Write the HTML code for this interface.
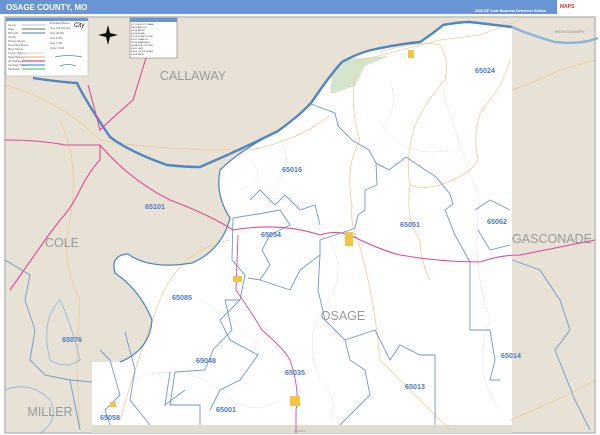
<!DOCTYPE html>
<html><head><style>
html,body{margin:0;padding:0;width:600px;height:435px;overflow:hidden;background:#fff;font-family:"Liberation Sans",sans-serif}
</style></head><body>
<svg width="600" height="435" viewBox="0 0 600 435" xmlns="http://www.w3.org/2000/svg" font-family="Liberation Sans, sans-serif">
<rect width="600" height="435" fill="#fff"/>
<rect x="0" y="0" width="557" height="14" fill="#6a95d5"/>
<text x="6" y="10" font-size="8" font-weight="bold" fill="#fff">OSAGE COUNTY, MO</text>
<text x="546" y="12" font-size="3.5" fill="#fff" text-anchor="end" font-weight="bold">2026 ZIP Code Business Reference Edition</text>
<rect x="557" y="0" width="43" height="14" fill="#fff"/>
<text x="560" y="8" font-size="5" fill="#c33" font-weight="bold">MAPS</text>
<rect x="5" y="17" width="590" height="416" fill="#e7e2d5" stroke="#bbb" stroke-width="1.5"/>
<path d="M92,362 L120,362 Q150,350 152,320 Q140,290 115,273 Q110,255 128,254 Q150,270 192,263 Q222,250 230,218 Q215,195 220,170 Q240,150 278,131 Q300,115 311,103 Q330,75 342,62 Q360,52 376,49 Q400,44 420,42 Q435,32 443,25 Q460,22 470,22 L512,27 L512,427 L300,426 L92,428 Z" fill="#fff"/>
<rect x="92" y="425" width="420" height="8" fill="#e0dccf"/>
<text x="300" y="432" font-size="3" fill="#999" text-anchor="middle">MARIES</text>
<path d="M330,93 L332,76 L342,59 L389,56 L365,66 L355,86 L335,93 Z" fill="#d5e5cc"/>
<g fill="none" stroke="#efc68f" stroke-width="0.8" opacity="0.9">
<path d="M5,85 Q60,100 100,140 Q150,150 250,150 Q300,140 330,115 M355,62 Q400,50 440,40 L480,35 L520,20"/>
<path d="M380,52 Q420,40 440,45 Q450,60 445,80 Q430,95 415,125 Q405,160 410,185 Q420,190 440,185 Q470,175 478,160 Q470,120 490,100 Q505,80 510,60"/>
<path d="M355,75 Q350,110 360,140 Q345,165 352,205 Q350,225 358,240 Q375,300 380,360 Q420,400 450,430"/>
<path d="M410,185 Q405,220 420,240 Q420,260 430,280"/>
<path d="M60,120 Q80,160 70,220 Q60,260 80,300 Q75,360 80,430"/>
<path d="M230,240 Q180,250 160,300 Q140,350 120,420"/>
<path d="M510,420 Q560,400 595,380 M512,90 Q540,80 560,70 L595,60"/>
</g>
<g fill="none" stroke="#e2e2e2" stroke-width="0.5">
<path d="M250,200 Q300,190 320,230 Q350,260 330,300 Q300,330 320,380 Q340,400 330,420"/>
<path d="M440,80 Q460,150 480,200 Q470,260 490,320 Q470,370 500,410"/>
<path d="M130,380 Q180,360 220,390 Q250,420 280,400"/>
<path d="M280,140 Q300,170 260,200 M380,120 Q400,160 450,150 M200,300 Q240,320 260,350 M390,80 Q400,110 380,130 M250,160 Q270,180 240,190"/>
</g>
<g fill="none" stroke="#6f98c9" stroke-width="0.9">
<path d="M311,104 L335,113 L338,126 L352,140 L369,150 L376,163 L389,170 L406,157 L436,177 L450,194 L453,204 L445,210 L455,235 L470,262 L470,285 L470,330 L490,330 L495,360 L490,380 L500,380"/>
<path d="M376,163 L377,185 L365,190 L365,210 L358,215 L355,228"/>
<path d="M233,218 L258,214 L280,210 L290,225 L270,235 L262,250 L270,265 L260,280 L248,278"/>
<path d="M250,200 L260,190 L275,205 L285,195 L300,210 L315,205 L320,225"/>
<path d="M260,280 L290,290 L300,270 L320,255 L320,240 L350,230 L355,228"/>
<path d="M320,255 L318,290 L325,320 L345,340 L350,360 L365,370 L370,395 L340,425"/>
<path d="M345,340 L375,330 L390,360 L400,345 L420,355 L435,355 L435,425"/>
<path d="M475,210 L490,200 L510,210 M478,230 L490,250 L510,245"/>
<path d="M100,350 L110,360 L120,395 L105,410 L110,425 M125,332 L135,370 L130,400 L150,425"/>
<path d="M233,218 L232,260 L245,275 L240,300 L225,300 L232,330 L213,350 L205,370 L175,372 L170,405 L200,405 L200,425"/>
<path d="M170,372 L165,405 L185,390 M240,300 L220,320 L230,340 L258,355 L240,380 L220,390 L210,410"/>
<path d="M5,260 L30,275 L25,300 L35,330 L30,360 L45,375 L70,380 L92,382 M70,380 L80,430 M512,260 L540,270 L560,300 L570,330 L555,350 L575,400 L590,430"/>
</g>
<g fill="none" stroke="#4f87c2">
<path d="M33,78 Q60,82 77,83 Q85,100 110,137 Q130,152 167,165 Q185,167 200,167 Q240,150 278,131 Q300,115 311,103 Q330,75 342,62 Q360,52 376,49 Q400,44 420,42 Q435,32 443,25 Q460,22 470,22 L512,27" stroke-width="2.4"/>
<path d="M512,27 Q530,35 555,42 Q580,45 598,38" stroke-width="2.4" stroke="#8cb3dd"/>
<path d="M278,131 Q240,150 220,170 Q215,195 230,218 Q222,250 192,263 Q150,270 128,254 Q110,255 115,273 Q140,290 152,320 Q150,350 120,362" stroke-width="1.3"/>
<path d="M60,300 Q40,320 50,360 Q65,370 80,360 Q70,320 60,300 M5,390 Q30,380 50,400 Q60,420 40,433" stroke-width="0.8" stroke="#8cb3dd"/>
</g>
<g fill="none" stroke="#e0479a" stroke-width="1.1">
<path d="M88,85 Q95,110 100,130 Q110,120 133,100 L150,45"/>
<path d="M5,140 Q40,140 65,145 L100,145 L100,160 Q90,170 80,190 Q70,210 60,220 L45,240 L10,290"/>
<path d="M100,145 Q130,180 170,200 Q210,215 233,230 Q280,222 320,235 Q335,230 350,235 Q380,250 400,255 Q440,262 480,262 Q500,255 520,255 L595,240"/>
<path d="M238,235 L236,290 Q250,310 262,330 Q285,350 290,360 Q300,390 296,410 L296,433" stroke-width="0.9"/>
</g>
<g fill="#f4c542"><rect x="345" y="232" width="8" height="14"/><rect x="233" y="276" width="9" height="6"/><rect x="290" y="396" width="10" height="10"/><rect x="110" y="402" width="6" height="5"/><rect x="408" y="50" width="6" height="8"/></g>
<g fill="#999" font-size="12.5" text-anchor="middle"><text x="193" y="80">CALLAWAY</text><text x="62" y="247">COLE</text><text x="552" y="243">GASCONADE</text><text x="343" y="320">OSAGE</text><text x="50" y="416">MILLER</text></g>
<text x="570" y="33" font-size="4" fill="#888" text-anchor="middle">MONTGOMERY</text>
<g fill="#4a78c0" font-size="7.2" font-weight="bold" text-anchor="middle">
<text x="485" y="73">65024</text><text x="292" y="172">65016</text><text x="155" y="209">65101</text><text x="410" y="227">65051</text><text x="497" y="224">65062</text><text x="271" y="237">65054</text><text x="182" y="300">65085</text><text x="72" y="342">65076</text><text x="511" y="358">65014</text><text x="206" y="363">65048</text><text x="295" y="375">65035</text><text x="415" y="389">65013</text><text x="226" y="412">65001</text><text x="110" y="420">65058</text>
</g>
<rect x="6" y="18" width="82" height="58" fill="#fff" stroke="#aaa" stroke-width="0.5"/>
<rect x="6" y="18" width="82" height="3" fill="#6a95d5"/>
<g font-size="2.5" fill="#555"><text x="8" y="26">County</text><text x="8" y="30">State</text><text x="8" y="34">ZIP Code</text><text x="8" y="38">Vicinity</text><text x="8" y="42">Primary Streets</text><text x="8" y="46">Secondary Streets</text><text x="8" y="50">Minor Streets</text><text x="8" y="54">County Highways</text><text x="8" y="58">State Highways</text><text x="8" y="62">US Highways</text><text x="8" y="66">Interstate Highways</text><text x="8" y="70">Toll Roads</text>
<text x="50" y="24">Populated Places</text><text x="50" y="29">Over 100,000 plus</text><text x="50" y="34">Over 25,000</text><text x="50" y="39">Over 5,000</text><text x="50" y="44">Over 1,000</text><text x="50" y="49">Under 1,000</text></g>
<g stroke-width="1.2"><line x1="22" y1="25" x2="45" y2="25" stroke="#ccc"/><line x1="22" y1="29" x2="45" y2="29" stroke="#888"/><line x1="22" y1="33" x2="45" y2="33" stroke="#9bbde0" stroke-width="2"/><line x1="22" y1="53" x2="45" y2="53" stroke="#ddd"/><line x1="22" y1="57" x2="45" y2="57" stroke="#f0c080"/><line x1="22" y1="61" x2="45" y2="61" stroke="#e0479a"/><line x1="22" y1="65" x2="45" y2="65" stroke="#4aa0e0"/><line x1="22" y1="69" x2="45" y2="69" stroke="#6c6"/></g>
<path d="M55,57 Q68,54 82,57 M60,66 Q68,63 76,66" stroke="#4f87c2" fill="none" stroke-width="0.8"/>
<text x="74" y="27" font-size="6" font-style="italic">City</text>
<rect x="130" y="18" width="47" height="40" fill="#fff" stroke="#666" stroke-width="0.5"/>
<rect x="130" y="18" width="47" height="4" fill="#6a95d5"/>
<g font-size="2.2" fill="#333"><text x="131" y="25">ZIP CODE  CITY NAME</text><text x="131" y="28">65001  ARGYLE</text><text x="131" y="31">65013  BELLE</text><text x="131" y="34">65014  BLAND</text><text x="131" y="37">65016  BONNOTS MILL</text><text x="131" y="40">65024  CHAMOIS</text><text x="131" y="43">65035  FREEBURG</text><text x="131" y="46">65048  KOELTZTOWN</text><text x="131" y="49">65051  LINN</text><text x="131" y="52">65054  LOOSE CREEK</text><text x="131" y="55">65058  META</text></g>
<path d="M108,25 L110,33 L118,35 L110,37 L108,45 L106,37 L98,35 L106,33 Z" fill="#111"/>
</svg>
</body></html>
